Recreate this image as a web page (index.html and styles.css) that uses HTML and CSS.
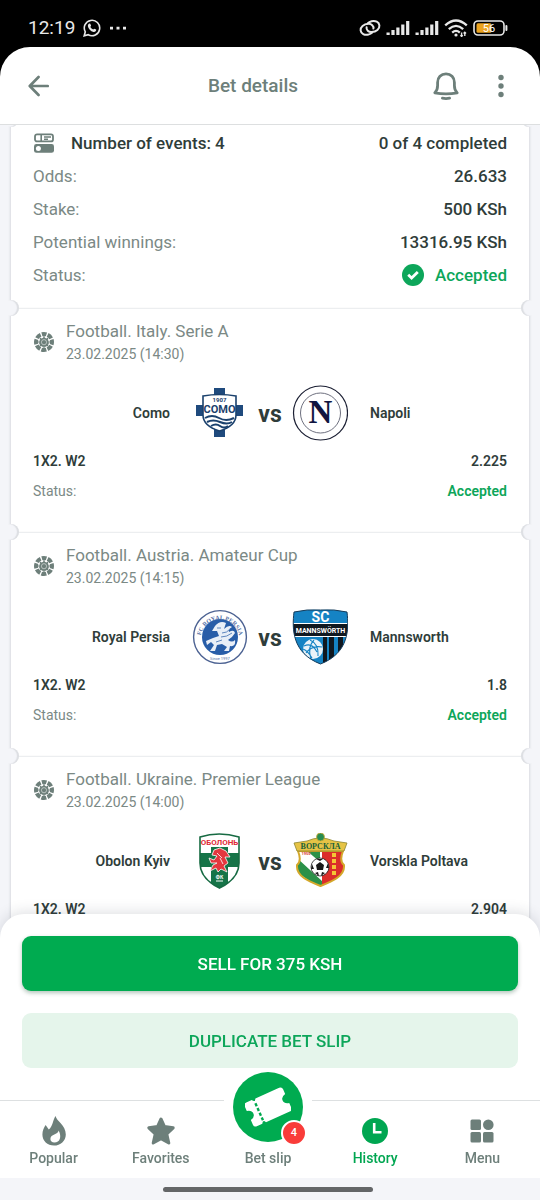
FILE: index.html
```html
<!DOCTYPE html>
<html lang="en">
<head>
    <meta charset="UTF-8">
    <meta name="viewport" content="width=device-width, initial-scale=1.0">
    <title>Bet details</title>
    <link rel="stylesheet" href="styles.css">
</head>
<body>
    <!-- shared icons -->
    <svg class="sprite" aria-hidden="true">
        <symbol id="icon-football" viewBox="0 0 20 20">
            <circle cx="10" cy="10" r="8" fill="none" stroke="currentColor" stroke-width="4" stroke-dasharray="5 1.283" stroke-dashoffset="2.5" transform="rotate(-90 10 10)"/>
            <path stroke="currentColor" stroke-width="1.2" d="M10 4V16M4 10H16M6 6L14 14M14 6L6 14"/>
            <path fill="currentColor" d="M10 5.2L14.2 7.4L14.8 12L12 14.8H8L5.2 12L5.8 7.4Z"/>
            <circle cx="10" cy="10.2" r="2.6" fill="none" stroke="#fff" stroke-width="0.5"/>
        </symbol>
        <symbol id="icon-signal" viewBox="0 0 24 16">
            <path fill="currentColor" d="M0.5 12.5h3.2V15H0.5zM5.4 10h3.2v5H5.4zM10.3 7.5h3.2V15h-3.2zM15.2 4.5h3.2V15h-3.2zM20.1 1h3.2v14h-3.2z"/>
        </symbol>
    </svg>

    <div class="app">
        <div class="status-bar">
            <span class="status-time">12:19</span>
            <svg class="status-chat" width="18" height="18" viewBox="0 0 18 18">
                <path fill="none" stroke="currentColor" stroke-width="1.6" d="M1.2 16.8L2.3 12.8A7.7 7.7 0 1 1 5.2 15.7Z"/>
                <path fill="currentColor" d="M6.2 4.6L7.3 4.8L8.1 6.8L7.3 7.9C8 9.1 8.9 10 10.2 10.6L11.2 9.7L13.2 10.6C13.4 12.2 12 13.2 10.5 12.9C7.6 12.3 5.3 9.7 4.9 7.2C4.8 6 5.4 5 6.2 4.6Z"/>
            </svg>
            <svg width="18" height="4" viewBox="0 0 18 4">
                <path fill="currentColor" d="M1 0.8h3v2.6H1zM7.5 0.8h3v2.6h-3zM14 0.8h3v2.6h-3z"/>
            </svg>
            <div class="status-icons">
                <svg width="22" height="18" viewBox="0 0 22 18" fill="none" stroke="currentColor" stroke-width="2" stroke-linecap="round">
                    <path d="M14.4 9.6C15 7 12.4 4.6 9.4 4.8C4.6 5 1.2 8 1.6 11.4C2 14.8 5.6 16.4 9.4 15.6C11 15.2 12.2 14.6 13.2 13.6"/>
                    <path d="M7.6 8.2C7 10.8 9.6 13.2 12.6 13C17.4 12.8 20.8 9.8 20.4 6.4C20 3 16.4 1.4 12.6 2.2C11 2.6 9.8 3.2 8.8 4.2"/>
                </svg>
                <svg width="24" height="16"><use href="#icon-signal"/></svg>
                <svg width="24" height="16"><use href="#icon-signal"/></svg>
                <svg width="24" height="18" viewBox="0 0 24 18" fill="none" stroke="currentColor" stroke-width="2.3">
                    <path d="M1.2 6.4Q12-3.4 22.8 6.4M4.8 10.2Q12 3.6 19.2 10.2M8.2 13.6Q12 10.2 15.8 13.6"/>
                    <circle cx="12" cy="16" r="1.6" fill="currentColor" stroke="none"/>
                    <path stroke-width="1.4" d="M17.6 13.6V17.6M20.8 13V17M16.4 16.2L17.6 17.4L18.8 16.2M19.6 14.4L20.8 13.2L22 14.4"/>
                </svg>
                <svg width="35" height="16" viewBox="0 0 35 16">
                    <rect x="1" y="1" width="30" height="14" rx="4" fill="none" stroke="currentColor" stroke-width="1.6"/>
                    <rect x="3.5" y="3.2" width="15" height="9.6" rx="1.5" fill="#eba31f"/>
                    <rect x="32.4" y="5" width="2" height="6" rx="1" fill="currentColor"/>
                    <text class="battery-text" x="16" y="12" text-anchor="middle">56</text>
                </svg>
            </div>
        </div>

        <header class="header">
            <button class="icon-btn back-btn" type="button" aria-label="Back">
                <svg width="22" height="22" viewBox="0 0 24 24" fill="none" stroke="currentColor" stroke-width="2.9" stroke-linecap="round" stroke-linejoin="round">
                    <path d="M12.6 2.2L3 12L12.6 21.8M3.4 12H22.6"/>
                </svg>
            </button>
            <h1>Bet details</h1>
            <div class="header-actions">
                <button class="icon-btn" type="button" aria-label="Notifications">
                    <svg width="28" height="28" viewBox="0 0 28 28" fill="none" stroke="currentColor" stroke-width="2.8" stroke-linecap="round" stroke-linejoin="round">
                        <path d="M2.8 20.8C4.6 19.4 5.6 17.4 5.6 13.6V10.4C5.6 5.6 9 1.8 14 1.8S22.4 5.6 22.4 10.4V13.6C22.4 17.4 23.4 19.4 25.2 20.8Q14 23 2.8 20.8Z"/>
                        <path d="M10.4 26.2Q14 27 17.6 26.2"/>
                    </svg>
                </button>
                <button class="icon-btn" type="button" aria-label="More">
                    <svg width="6" height="24" viewBox="0 0 6 24" fill="currentColor">
                        <circle cx="3" cy="3.5" r="2.7"/><circle cx="3" cy="12" r="2.7"/><circle cx="3" cy="20.5" r="2.7"/>
                    </svg>
                </button>
            </div>
        </header>

        <main class="ticket-list">
            <section class="ticket summary">
                <div class="summary-row">
                    <svg class="summary-icon" width="20" height="20" viewBox="0 0 20 20">
                        <rect x="1" y="1.4" width="18" height="7" rx="2" fill="none" stroke="currentColor" stroke-width="1.8"/>
                        <path stroke="currentColor" stroke-width="1.6" d="M7.2 1.5V8.2M10 4H17M10 6.2H14"/>
                        <rect x="0" y="11" width="20" height="8.8" rx="2.4" fill="currentColor"/>
                        <circle cx="4.4" cy="15.4" r="2.5" fill="#fff"/>
                    </svg>
                    <strong>Number of events: 4</strong>
                    <strong class="value">0 of 4 completed</strong>
                </div>
                <div class="summary-row"><span>Odds:</span><strong class="value">26.633</strong></div>
                <div class="summary-row"><span>Stake:</span><strong class="value">500 KSh</strong></div>
                <div class="summary-row"><span>Potential winnings:</span><strong class="value">13316.95 KSh</strong></div>
                <div class="summary-row">
                    <span>Status:</span>
                    <strong class="value accepted">
                        <svg width="22" height="22" viewBox="0 0 22 22">
                            <circle cx="11" cy="11" r="11" fill="currentColor"/>
                            <path fill="none" stroke="#fff" stroke-width="2.8" d="M6.2 10.8L9.6 14L15.8 8"/>
                        </svg>
                        Accepted
                    </strong>
                </div>
            </section>

            <section class="ticket match">
                <div class="match-head">
                    <svg width="20" height="20"><use href="#icon-football"/></svg>
                    <div>
                        <h2>Football. Italy. Serie A</h2>
                        <p>23.02.2025 (14:30)</p>
                    </div>
                </div>
                <div class="teams">
                    <span class="team home">Como</span>
                    <svg class="crest" viewBox="0 0 56 56">
                        <path fill="#1f4a7d" d="M22 3h11v10h-11zM4 20h47v11H4zM22 42h11v10h-11z"/>
                        <path fill="#fff" stroke="#1b416d" stroke-width="1.6" d="M11 11Q27.5 8 44 11V30C44 38 37 43 27.5 46C18 43 11 38 11 30Z"/>
                        <text x="27.5" y="17" font-size="6" font-weight="700" fill="#1b416d" text-anchor="middle">1907</text>
                        <text x="27.5" y="28" font-size="11" font-weight="700" fill="#1b416d" text-anchor="middle">COMO</text>
                        <path fill="none" stroke="#1b416d" stroke-width="2" d="M13 33Q20 29 27 33T42 33M15 37Q21 34 28 37T40 37M19 41Q24 38 28 41T36 41"/>
                    </svg>
                    <span class="vs">vs</span>
                    <svg class="crest" viewBox="0 0 56 56">
                        <circle cx="28.5" cy="28" r="27" fill="#fff" stroke="#1b1f33" stroke-width="1.2"/>
                        <circle cx="28.5" cy="28" r="20" fill="none" stroke="#5d6070" stroke-width="0.9"/>
                        <text x="28.5" y="38" class="serif" font-size="33" font-weight="700" fill="#101540" text-anchor="middle">N</text>
                    </svg>
                    <span class="team">Napoli</span>
                </div>
                <div class="bet-row"><strong>1X2. W2</strong><strong>2.225</strong></div>
                <div class="bet-row"><span>Status:</span><strong class="accepted">Accepted</strong></div>
            </section>

            <section class="ticket match">
                <div class="match-head">
                    <svg width="20" height="20"><use href="#icon-football"/></svg>
                    <div>
                        <h2>Football. Austria. Amateur Cup</h2>
                        <p>23.02.2025 (14:15)</p>
                    </div>
                </div>
                <div class="teams">
                    <span class="team home">Royal Persia</span>
                    <svg class="crest" viewBox="0 0 56 56">
                        <defs><path id="persia-arc" d="M8.5 30A19.5 19.5 0 0 1 47.5 30"/></defs>
                        <circle cx="28" cy="28" r="26.4" fill="#fff" stroke="#4c6292" stroke-width="1.4"/>
                        <circle cx="28" cy="28" r="18" fill="#285da8"/>
                        <text font-size="6" class="serif" font-weight="700" fill="#5570a4" text-anchor="middle"><textPath href="#persia-arc" startOffset="50%">FC ROYAL PERSIA</textPath></text>
                        <path fill="#e8eef7" d="M23 17Q28 11 34 14L32 20Q37 15 40 18Q36 20 37 23Q42 20 43 24Q40 29 36 31Q40 34 43 31Q44 38 38 37L37 42H32L35 38L30 35L25 36L23 42H18L22 36L19 33L15 36L14 32L21 29L27 27L25 22L20 22Z"/>
                        <path fill="none" stroke="#5f86bd" stroke-width="1" d="M30 24Q35 24 38 20M29 28Q35 28 40 24M25 19H29M24 33L30 31"/>
                        <text x="28" y="51" font-size="4" fill="#5570a4" text-anchor="middle">Since 1997</text>
                    </svg>
                    <span class="vs">vs</span>
                    <svg class="crest" viewBox="0 0 56 56">
                        <clipPath id="mannsworth-shield"><path d="M2 3Q15 0 28.5 1Q42 0 55 3C57 20 57 44 28.5 55C0 44 0 20 2 3Z"/></clipPath>
                        <g clip-path="url(#mannsworth-shield)">
                            <rect width="56" height="56" fill="#1583c4"/>
                            <path fill="#101820" d="M0 15h56v12H0zM31 27h4v29h-4zM37 27h5v29h-5zM46 27h5v29h-5z"/>
                            <path fill="#fff" d="M0 14h56v1H0zM0 27h56v1H0z"/>
                            <circle cx="21" cy="40" r="10" fill="#eaf3f9"/>
                            <path fill="none" stroke="#1583c4" stroke-width="1.1" d="M12 37Q20 33 25 43M14 44Q20 36 30 38M18 31Q27 35 26 47M22 31Q15 38 19 50M11 40Q16 42 20 49"/>
                        </g>
                        <path fill="none" stroke="#163c5b" stroke-width="1" d="M2 3Q15 0 28.5 1Q42 0 55 3C57 20 57 44 28.5 55C0 44 0 20 2 3Z"/>
                        <text x="28.5" y="13" font-size="14" font-weight="700" fill="#fff" text-anchor="middle">SC</text>
                        <text x="28.5" y="24" font-size="7" font-weight="700" fill="#fff" text-anchor="middle">MANNSWÖRTH</text>
                    </svg>
                    <span class="team">Mannsworth</span>
                </div>
                <div class="bet-row"><strong>1X2. W2</strong><strong>1.8</strong></div>
                <div class="bet-row"><span>Status:</span><strong class="accepted">Accepted</strong></div>
            </section>

            <section class="ticket match">
                <div class="match-head">
                    <svg width="20" height="20"><use href="#icon-football"/></svg>
                    <div>
                        <h2>Football. Ukraine. Premier League</h2>
                        <p>23.02.2025 (14:00)</p>
                    </div>
                </div>
                <div class="teams">
                    <span class="team home">Obolon Kyiv</span>
                    <svg class="crest" viewBox="0 0 56 56">
                        <clipPath id="obolon-shield"><path d="M8 4Q27 -2 47 4V30C47 43 38 50 27.5 55C17 50 8 43 8 30Z"/></clipPath>
                        <g clip-path="url(#obolon-shield)">
                            <rect width="56" height="56" fill="#fff"/>
                            <path fill="#167448" d="M8 20h40v14H8zM19 14h17v42H19z"/>
                            <path fill="#fff" d="M8 3h40v11H8z"/>
                        </g>
                        <path fill="none" stroke="#176b43" stroke-width="1.6" d="M8 4Q27 -2 47 4V30C47 43 38 50 27.5 55C17 50 8 43 8 30Z"/>
                        <text x="27.5" y="12" font-size="8" font-weight="700" fill="#e02a38" text-anchor="middle">ОБОЛОНЬ</text>
                        <path fill="#e4373f" stroke="#fff" stroke-width="0.8" d="M22 17L28 15L34 18L38 24L33 24L36 30L32 33L35 39L29 36L26 39L24 35L18 38L21 32L25 30L19 30L17 25L22 27L25 23L20 22Z"/>
                        <path stroke="#fff" stroke-width="0.8" d="M25 20L30 25M28 25L31 31"/>
                        <text x="27.5" y="46" font-size="5" font-weight="700" fill="#fff" text-anchor="middle">ФК</text>
                        <path stroke="#fff" d="M24 48h7"/>
                    </svg>
                    <span class="vs">vs</span>
                    <svg class="crest" viewBox="0 0 56 56">
                        <clipPath id="vorskla-shield"><path d="M6 18H51Q47 28 52 32C53 43 41 48 28.5 53C16 48 4 43 5 32Q10 28 6 18Z"/></clipPath>
                        <g clip-path="url(#vorskla-shield)">
                            <rect width="56" height="56" fill="#fff"/>
                            <path fill="#2b9149" d="M4 24L30 48V56L4 39ZM14 17H28V29Z"/>
                            <path fill="#db2e2b" d="M30 16h25v40H30z"/>
                            <path fill="#f4c635" d="M40 20h4v4h-4zM40 26h4v4h-4zM40 32h4v4h-4zM40 38h4v4h-4z"/>
                        </g>
                        <path fill="none" stroke="#d4a82a" stroke-width="2" d="M6 18H51Q47 28 52 32C53 43 41 48 28.5 53C16 48 4 43 5 32Q10 28 6 18Z"/>
                        <path fill="#e6c345" stroke="#8b842e" stroke-width="0.8" d="M2 10L15 8Q28 2 42 8L55 10L52 18H5Z"/>
                        <circle cx="28.5" cy="4" r="4" fill="#278c51" stroke="#d2ac33" stroke-width="0.8"/>
                        <text x="28.5" y="16" font-size="8" font-weight="700" fill="#176039" text-anchor="middle" class="serif">ВОРСКЛА</text>
                        <text x="14" y="22" font-size="4" font-weight="700" fill="#d83a30" text-anchor="middle">1955</text>
                        <circle cx="28" cy="34" r="9" fill="#fff" stroke="#222" stroke-width="0.8"/>
                        <path fill="#181818" d="M28 29L32 32L31 37H25L24 32ZM24 26H31L28 28ZM20 31L22 36L19 36ZM36 30L37 35L34 35ZM23 40L26 39L27 43ZM33 40L30 39L29 43Z"/>
                    </svg>
                    <span class="team">Vorskla Poltava</span>
                </div>
                <div class="bet-row"><strong>1X2. W2</strong><strong>2.904</strong></div>
            </section>
        </main>

        <div class="actions">
            <button class="btn btn-sell" type="button">SELL FOR 375 KSH</button>
            <button class="btn btn-duplicate" type="button">DUPLICATE BET SLIP</button>
        </div>

        <nav class="bottom-nav">
            <a href="#popular">
                <svg width="28" height="30" viewBox="0 0 28 30">
                    <path fill="currentColor" d="M15.6 0C16.2 5 25.8 9 25.8 18.5C25.8 25 20.5 29.6 14 29.6C7.4 29.6 2.4 25 2.4 18.6C2.4 14.5 4 11.5 5.6 9L8.8 13.6C13 10 12.8 4 15.6 0Z"/>
                    <path fill="#fff" d="M18.6 14.5C18 19 10.6 17.8 10.4 23C10.4 25 12 26.6 14.4 26.6C20 26.6 22 20.6 18.6 14.5Z"/>
                </svg>
                <span>Popular</span>
            </a>
            <a href="#favorites">
                <svg width="30" height="30" viewBox="0 0 30 30">
                    <path fill="currentColor" stroke="currentColor" stroke-width="3" stroke-linejoin="round" d="M15 3L18.4 10.4L27.2 11.8L20.8 18L22.8 27L15 22.8L7.2 27L9.2 18L2.8 11.8L11.6 10.4Z"/>
                </svg>
                <span>Favorites</span>
            </a>
            <a href="#bet-slip">
                <div class="slip-circle">
                    <svg width="46" height="40" viewBox="0 0 46 40">
                        <g transform="rotate(-24 23 20)">
                            <path fill="#fff" d="M5 7H11Q13 11 15 7H41Q44 7 44 10V15Q39 16 39 20T44 25V30Q44 33 41 33H15Q13 29 11 33H5Q2 33 2 30V25Q7 24 7 20T2 15V10Q2 7 5 7Z"/>
                            <path stroke="#00a94f" stroke-width="2.4" stroke-dasharray="3.2 2" d="M13 11.500V30"/>
                        </g>
                    </svg>
                    <span class="badge">4</span>
                </div>
                <span>Bet slip</span>
            </a>
            <a href="#history" class="active">
                <svg width="28" height="28" viewBox="0 0 28 28">
                    <circle cx="14" cy="14" r="13" fill="currentColor"/>
                    <path fill="none" stroke="#fff" stroke-width="2.6" d="M13.2 6V15.2H20.5"/>
                </svg>
                <span>History</span>
            </a>
            <a href="#menu">
                <svg width="26" height="26" viewBox="0 0 26 26" fill="currentColor">
                    <rect x="1.5" y="1.5" width="10.5" height="10.5" rx="1.5"/>
                    <circle cx="19.3" cy="6.8" r="5.3"/>
                    <rect x="1.5" y="14" width="10.5" height="10.5" rx="1.5"/>
                    <rect x="14" y="14" width="10.5" height="10.5" rx="1.5"/>
                </svg>
                <span>Menu</span>
            </a>
        </nav>
        <div class="home-bar"></div>
    </div>
</body>
</html>
```

FILE: styles.css
```css
* {
    margin: 0;
    padding: 0;
    box-sizing: border-box;
}

body {
    font-family: Roboto, sans-serif;
    font-size: 16px;
    color: #2f3d3a;
    background: #000;
}

button {
    font-family: inherit;
    border: none;
    cursor: pointer;
}

svg {
    display: block;
    flex: none;
}

.sprite {
    position: absolute;
    width: 0;
    height: 0;
}

.app {
    display: flex;
    flex-direction: column;
    height: 100vh;
}

/* Phone status bar */
.status-bar {
    display: flex;
    align-items: center;
    flex: none;
    height: 47px;
    padding: 8px 32px 0 28px;
    color: #e8e8e8;
}

.status-time {
    font-size: 19px;
    line-height: 24px;
}

.status-chat {
    margin: 0 8px;
}

.status-icons {
    display: flex;
    align-items: center;
    gap: 5px;
    margin-left: auto;
}

.battery-text {
    font-size: 11px;
    fill: #fff;
}

/* Header */
.header {
    position: relative;
    z-index: 2;
    display: flex;
    align-items: center;
    flex: none;
    height: 78px;
    padding-right: 19px;
    background: #fff;
    border-bottom: 1px solid #dddfe0;
    border-radius: 30px 30px 0 0;
    color: #6d7f7a;
}

.header h1 {
    flex: 1;
    text-align: center;
    font-size: 19px;
    font-weight: 500;
}

.icon-btn {
    display: flex;
    align-items: center;
    justify-content: center;
    width: 40px;
    height: 40px;
    background: none;
    color: inherit;
}

.back-btn {
    width: 80px;
    padding-right: 4px;
}

.header-actions {
    display: flex;
    gap: 15px;
}

/* Ticket */
.ticket-list {
    flex: 1;
    min-height: 0;
    margin-top: -5px;
    padding: 0 11px;
    overflow-y: auto;
    scrollbar-width: none;
    background: #f4f5f9;
}

.ticket {
    position: relative;
    padding: 0 22px;
    background: #fff;
    box-shadow: -2px 0 2px -1px #d9dbe0, 2px 0 2px -1px #d9dbe0;
}

/* punched notches on both edges */
.ticket::before,
.ticket::after {
    content: "";
    position: absolute;
    z-index: 1;
    top: -9px;
    width: 11px;
    height: 16px;
    background: #f4f5f9;
}

.ticket::before {
    left: -3px;
    border-radius: 0 8px 8px 0;
    box-shadow: inset -2px 0 1px #dcdee2;
}

.ticket::after {
    right: -3px;
    border-radius: 8px 0 0 8px;
    box-shadow: inset 2px 0 1px #dcdee2;
}

.summary {
    padding-top: 6px;
    padding-bottom: 17px;
}

.summary-row {
    display: flex;
    align-items: center;
    height: 33px;
    font-size: 17px;
    color: #7b8985;
}

.summary-row strong {
    font-weight: 500;
    color: #2f3d3a;
}

.summary-icon {
    margin: 0 17px 0 1px;
    color: #6d7f7a;
}

.summary-row .value {
    display: flex;
    align-items: center;
    gap: 11px;
    margin-left: auto;
}

.ticket strong.accepted {
    color: #0da65a;
}

/* Match */
.match {
    padding-top: 10px;
    padding-bottom: 26px;
    border-top: 1px solid #eceef0;
}

.match-head {
    display: flex;
    align-items: center;
    gap: 12px;
    padding-left: 1px;
    color: #6d7f7a;
}

.match-head h2 {
    font-size: 17px;
    font-weight: 400;
    line-height: 24px;
    color: #7b8985;
}

.match-head p {
    font-size: 14px;
    line-height: 22px;
    color: #7b8985;
}

.teams {
    display: grid;
    grid-template-columns: 1fr 56px 44px 56px 1fr;
    align-items: center;
    margin: 20px 0 5px;
}

.team {
    padding: 0 22px;
    font-size: 14px;
    font-weight: 600;
}

.home {
    text-align: right;
}

.crest {
    width: 56px;
    height: 56px;
}

.serif {
    font-family: "Liberation Serif", serif;
}

.vs {
    padding-top: 4px;
    text-align: center;
    font-size: 23px;
    font-weight: 700;
    line-height: 24px;
}

.bet-row {
    display: flex;
    align-items: center;
    justify-content: space-between;
    height: 30px;
    font-size: 14px;
    color: #7b8985;
}

.bet-row strong {
    font-weight: 600;
    color: #2f3d3a;
}

/* Action sheet */
.actions {
    position: relative;
    z-index: 2;
    display: flex;
    flex-direction: column;
    flex: none;
    gap: 22px;
    margin-top: -24px;
    padding: 22px 22px 32px;
    background: #fff;
    border-radius: 24px 24px 0 0;
    box-shadow: 0 -2px 14px rgba(40, 50, 70, 0.15);
}

.btn {
    height: 55px;
    border-radius: 9px;
    font-size: 17px;
    font-weight: 500;
}

.btn-sell {
    background: #00ab50;
    color: #fff;
    box-shadow: 0 2px 4px rgba(0, 60, 30, 0.3);
}

.btn-duplicate {
    background: #e5f5eb;
    color: #0da65a;
}

/* Bottom navigation */
.bottom-nav {
    position: relative;
    z-index: 3;
    display: grid;
    grid-template-columns: repeat(5, 1fr);
    grid-template-rows: 100%;
    flex: none;
    height: 78px;
    padding-right: 4px;
    background: #fff;
    border-top: 1px solid #dde0e1;
}

.bottom-nav a {
    display: flex;
    flex-direction: column;
    align-items: center;
    justify-content: flex-end;
    padding-bottom: 10px;
    color: #6d7f7a;
    font-size: 14px;
    font-weight: 500;
    line-height: 20px;
    text-decoration: none;
}

.bottom-nav a > svg {
    height: 30px;
    margin-bottom: 2px;
}

.bottom-nav a.active {
    color: #00a651;
}

.slip-circle {
    position: relative;
    display: flex;
    align-items: center;
    justify-content: center;
    flex: none;
    width: 70px;
    height: 70px;
    margin-bottom: 6px;
    border-radius: 50%;
    background: #00ab50;
}

/* white gap in the line above the bar */
.slip-circle::before {
    content: "";
    position: absolute;
    z-index: -1;
    top: 24px;
    left: -9px;
    right: -9px;
    height: 12px;
    background: #fff;
}

.badge {
    position: absolute;
    right: -4px;
    bottom: -4px;
    width: 26px;
    height: 26px;
    border: 2px solid #fff;
    border-radius: 50%;
    background: #f93c39;
    color: #fff;
    font-size: 11px;
    line-height: 22px;
    text-align: center;
}

.home-bar {
    display: flex;
    align-items: center;
    justify-content: center;
    flex: none;
    height: 22px;
    padding-right: 4px;
    background: #f4f5f9;
}

.home-bar::before {
    content: "";
    width: 39%;
    height: 5px;
    border-radius: 3px;
    background: #646668;
}
```
